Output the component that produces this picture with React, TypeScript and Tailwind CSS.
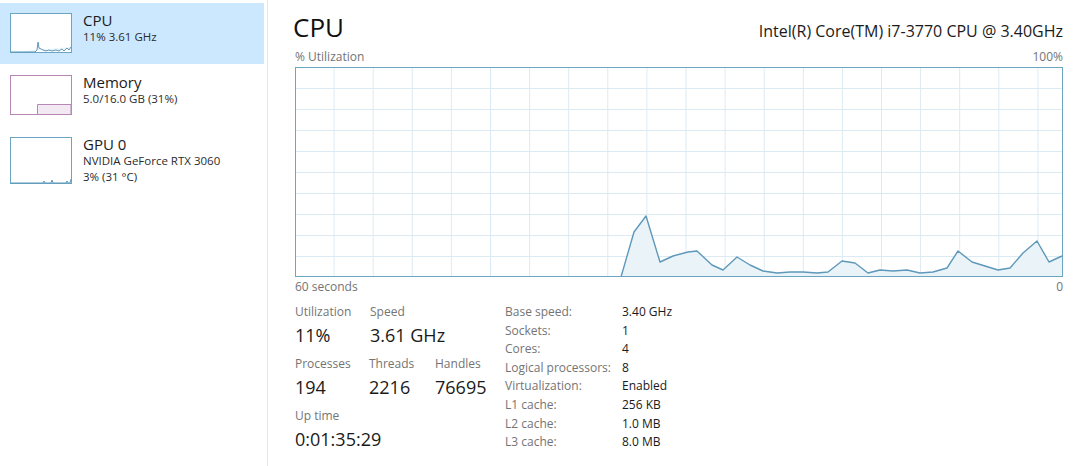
import React from 'react';

const FONT = { fontFamily: '"Open Sans", "Noto Sans", sans-serif' };

// CPU history samples, in graph coordinates (768 x 210)
const cpuPoints: [number, number][] = [
  [0, 210], [326, 210], [339, 165], [351, 149], [365, 195], [378, 189], [393, 185], [402, 184],
  [417, 198], [428, 203], [442, 190], [455, 198], [468, 204], [482, 206], [495, 205],
  [508, 205], [522, 206], [533, 205], [547, 194], [560, 196], [573, 206], [585, 203],
  [598, 204], [612, 203], [625, 206], [638, 205], [652, 201], [663, 184], [677, 195],
  [690, 199], [703, 203], [715, 201], [728, 186], [742, 174], [754, 195], [767, 189],
];

function UsageGraph() {
  const line = cpuPoints.map(([x, y]) => `${x},${y}`).join(' ');
  const area = `${line} 767,210 0,210`;
  return (
    <svg width="768" height="210" viewBox="0 0 768 210" className="block">
      {Array.from({ length: 19 }, (_, i) => (
        <line key={'v' + i} x1={39.1 * (i + 1)} y1="0" x2={39.1 * (i + 1)} y2="210" stroke="#dcebf3" strokeWidth="1" />
      ))}
      {Array.from({ length: 9 }, (_, i) => (
        <line key={'h' + i} x1="0" y1={21 * (i + 1) + 0.5} x2="768" y2={21 * (i + 1) + 0.5} stroke="#dcebf3" strokeWidth="1" />
      ))}
      <polygon points={area} fill="#eaf3f8" />
      <polyline points={line} fill="none" stroke="#5e98ba" strokeWidth="1.4" strokeLinejoin="round" />
      <rect x="0.5" y="0.5" width="767" height="209" fill="none" stroke="#6aa5c2" strokeWidth="1" />
    </svg>
  );
}

function CpuThumb() {
  return (
    <svg width="62" height="40" viewBox="0 0 62 40" className="block shrink-0">
      <rect x="0.5" y="0.5" width="61" height="39" fill="#ffffff" stroke="#6aa5c2" />
      <polyline
        points="1,39 25,39 27,37 28,29 29,35 31,36 33,37 36,38 39,37 42,38 46,37 49,38 52,36 54,38 57,35 59,37 61,34"
        fill="#eaf3f8"
        stroke="#5e98ba"
        strokeWidth="1"
      />
    </svg>
  );
}

function MemoryThumb() {
  return (
    <svg width="62" height="40" viewBox="0 0 62 40" className="block shrink-0">
      <rect x="0.5" y="0.5" width="61" height="39" fill="#ffffff" stroke="#b887b6" />
      <path d="M27.5 39.5 L27.5 29.5 L61 29.5 L61 39.5 Z" fill="#f3e9f3" stroke="#b887b6" strokeWidth="1" />
    </svg>
  );
}

function GpuThumb() {
  return (
    <svg width="62" height="47" viewBox="0 0 62 47" className="block shrink-0">
      <rect x="0.5" y="0.5" width="61" height="46" fill="#ffffff" stroke="#6aa5c2" />
      <polyline
        points="1,46 33,46 34,44 35,46 41,46 42,43 43,46 56,46 57,44 58,46 60,46 61,42"
        fill="none"
        stroke="#5e98ba"
        strokeWidth="1"
      />
    </svg>
  );
}

function SideItem({
  thumb,
  title,
  lines,
  selected,
  height,
}: {
  thumb: React.ReactNode;
  title: string;
  lines: string[];
  selected?: boolean;
  height: string;
}) {
  return (
    <div className={`flex items-start pl-[10px] pt-[8px] mb-[1px] ${height} ${selected ? 'bg-[#cce8ff]' : ''}`}>
      <div className="mt-[2px]">{thumb}</div>
      <div className="ml-[11px]">
        <div className="text-[15px] leading-[18px] text-[#1b1b1b]">{title}</div>
        {lines.map((l) => (
          <div key={l} className="text-[11.5px] leading-[16px] text-[#2b2b2b] whitespace-nowrap">{l}</div>
        ))}
      </div>
    </div>
  );
}

function Stat({ label, value, width }: { label: string; value: string; width: string }) {
  return (
    <div className={`${width} whitespace-nowrap`}>
      <div className="text-[12px] leading-[16px] text-[#747474]">{label}</div>
      <div className="mt-[3px] text-[18px] leading-[24px] text-[#1a1a1a]">{value}</div>
    </div>
  );
}

const specs: [string, string][] = [
  ['Base speed:', '3.40 GHz'],
  ['Sockets:', '1'],
  ['Cores:', '4'],
  ['Logical processors:', '8'],
  ['Virtualization:', 'Enabled'],
  ['L1 cache:', '256 KB'],
  ['L2 cache:', '1.0 MB'],
  ['L3 cache:', '8.0 MB'],
];

export default function App() {
  return (
    <div className="flex w-[1080px] h-[466px] bg-white overflow-hidden" style={FONT}>
      <aside className="w-[268px] shrink-0 border-r border-[#e8e8e8] pt-[3px] pr-[3px]">
        <SideItem thumb={<CpuThumb />} title="CPU" lines={['11% 3.61 GHz']} selected height="h-[61px]" />
        <SideItem thumb={<MemoryThumb />} title="Memory" lines={['5.0/16.0 GB (31%)']} height="h-[61px]" />
        <SideItem thumb={<GpuThumb />} title="GPU 0" lines={['NVIDIA GeForce RTX 3060', '3% (31 °C)']} height="h-[70px]" />
      </aside>

      <main className="flex-1 flex flex-col pl-[27px] pr-[17px]">
        <div className="flex items-baseline justify-between pt-[9px] h-[45px]">
          <div className="text-[26px] leading-[36px] text-[#111] -ml-[2px]">CPU</div>
          <div className="text-[16px] leading-[20px] text-[#1b1b1b]">Intel(R) Core(TM) i7-3770 CPU @ 3.40GHz</div>
        </div>
        <div className="flex justify-between mt-[4px] text-[12px] leading-[16px] text-[#747474]">
          <span>% Utilization</span>
          <span>100%</span>
        </div>
        <div className="mt-[2px]">
          <UsageGraph />
        </div>
        <div className="flex justify-between mt-[2px] text-[12px] leading-[16px] text-[#747474]">
          <span>60 seconds</span>
          <span>0</span>
        </div>

        <div className="flex mt-[6px]">
          <div className="w-[210px] pt-[3px]">
            <div className="flex">
              <Stat label="Utilization" value="11%" width="w-[75px]" />
              <Stat label="Speed" value="3.61 GHz" width="w-[66px]" />
            </div>
            <div className="flex mt-[9px]">
              <Stat label="Processes" value="194" width="w-[74px]" />
              <Stat label="Threads" value="2216" width="w-[66px]" />
              <Stat label="Handles" value="76695" width="w-[66px]" />
            </div>
            <div className="flex mt-[9px]">
              <Stat label="Up time" value="0:01:35:29" width="w-[150px]" />
            </div>
          </div>
          <div className="pt-[2px] text-[12px] leading-[18.6px]">
            {specs.map(([k, v]) => (
              <div key={k} className="flex">
                <span className="w-[117px] text-[#747474]">{k}</span>
                <span className="text-[#1a1a1a]">{v}</span>
              </div>
            ))}
          </div>
        </div>
      </main>
    </div>
  );
}
